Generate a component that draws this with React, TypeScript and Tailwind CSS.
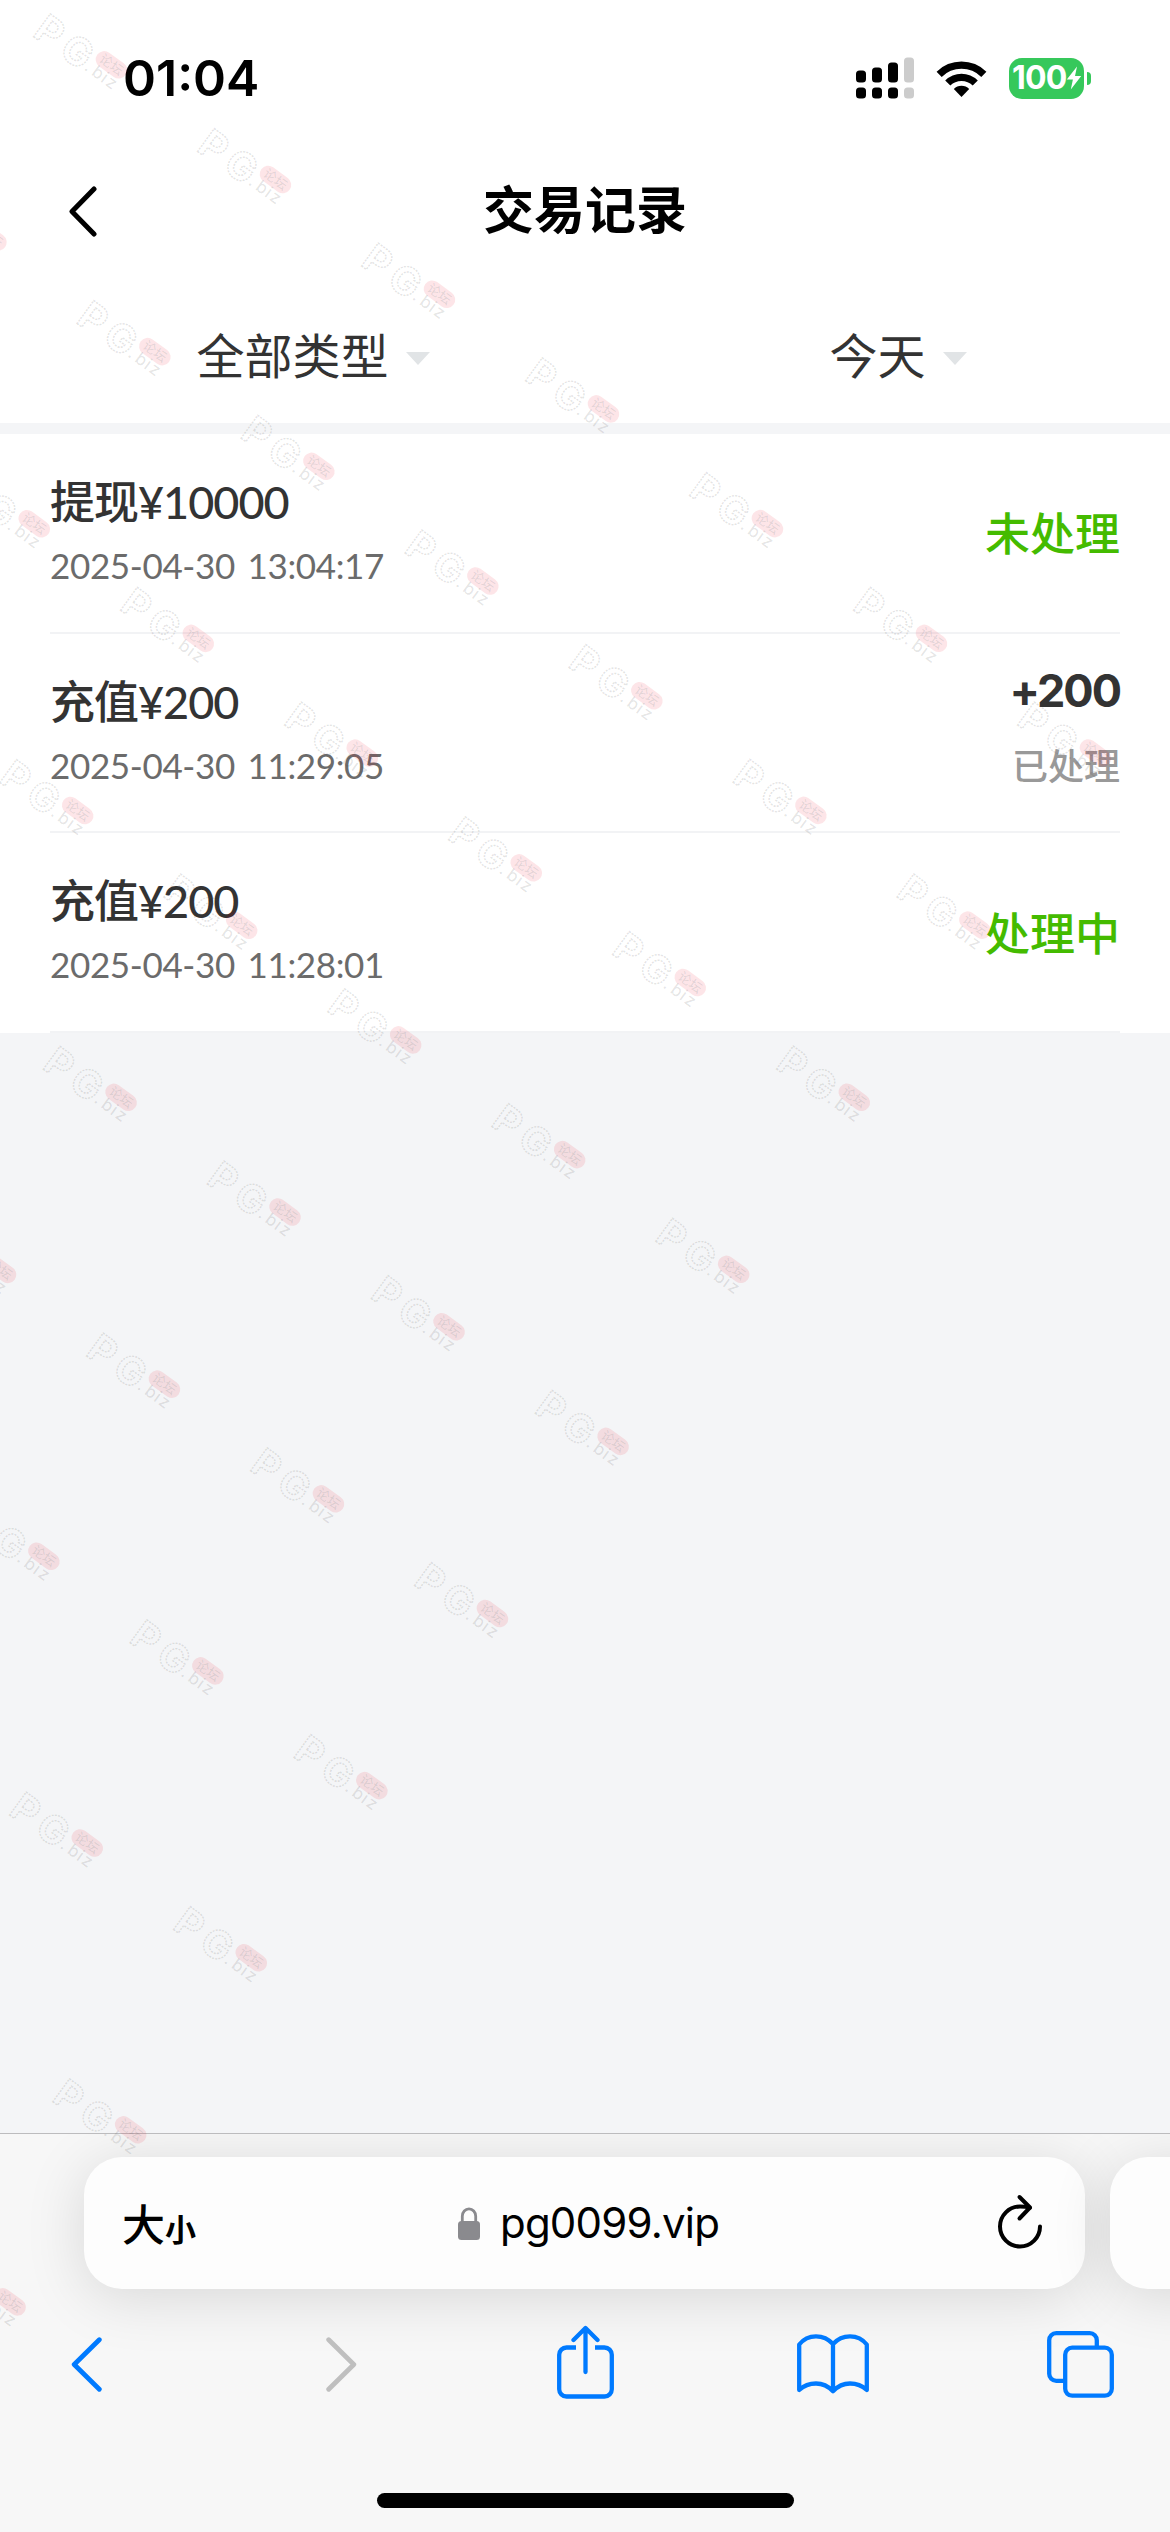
import type { ReactNode } from 'react';

type Transaction = {
  id: number;
  title: string;
  time: string;
  status: string;
  change?: string;
};

const transactions: Transaction[] = [
  { id: 1, title: '提现¥10000', time: '2025-04-30 13:04:17', status: '未处理' },
  { id: 2, title: '充值¥200', time: '2025-04-30 11:29:05', status: '已处理', change: '+200' },
  { id: 3, title: '充值¥200', time: '2025-04-30 11:28:01', status: '处理中' },
];

// Diagonal lattice: `row` steps down the page, `col` steps along the slanted line
const marks: { x: number; y: number }[] = [];
for (let row = 0; row <= 9; row++) {
  for (let col = -3; col <= 6 - row; col++) {
    const x = 33 + col * 164 + row * 43.4;
    const y = 14 + col * 114.7 + row * 286.8;
    if (x > -95 && y > -80) marks.push({ x, y });
  }
}

function Watermark() {
  return (
    <svg
      className="pointer-events-none absolute inset-0"
      width="1170"
      height="2532"
      viewBox="0 0 1170 2532"
      aria-hidden="true"
    >
      {marks.map((m, i) => (
        <g key={i} transform={`translate(${m.x} ${m.y + 21}) rotate(36)`}>
          <text
            x="-1 31"
            y="1"
            fontFamily="Inter, sans-serif"
            fontWeight="700"
            fontSize="39"
            fill="#000"
            fillOpacity="0.02"
            stroke="#555"
            strokeOpacity="0.17"
            strokeWidth="1.5"
            strokeDasharray="2 1.2"
          >
            PG
          </text>
          <g transform="translate(81 -22)">
            <rect x="-17.5" y="-8.5" width="35" height="17" rx="8.5" fill="#f00020" fillOpacity="0.1" />
            <text
              y="4.5"
              textAnchor="middle"
              fontFamily="'Noto Sans CJK SC', sans-serif"
              fontSize="13"
              fill="#3c6464"
              fillOpacity="0.15"
            >
              论坛
            </text>
          </g>
          <text
            x="61 69.5 81 87"
            y="-2"
            fontFamily="Inter, sans-serif"
            fontSize="17"
            fill="#444"
            fillOpacity="0.15"
          >
            .biz
          </text>
        </g>
      ))}
    </svg>
  );
}

function StatusBar() {
  return (
    <div className="flex h-[156px] items-center pl-[123px] pr-[79px]">
      <span className="font-[Inter] text-[50px] font-semibold leading-none text-black">01:04</span>
      <svg className="ml-auto" width="58" height="42" viewBox="0 0 58 42">
        <g fill="#000">
          <rect x="0" y="13.5" width="10" height="12" rx="3.5" />
          <rect x="16" y="10.5" width="10" height="15" rx="3.5" />
          <rect x="32" y="5.5" width="10" height="20" rx="3.5" />
          <rect x="0" y="30.5" width="10" height="11" rx="3.5" />
          <rect x="16" y="30.5" width="10" height="11" rx="3.5" />
          <rect x="32" y="30.5" width="10" height="11" rx="3.5" />
        </g>
        <g fill="#ccc">
          <rect x="48" y="0.5" width="10" height="25" rx="3.5" />
          <rect x="48" y="30.5" width="10" height="11" rx="3.5" />
        </g>
      </svg>
      <svg className="ml-[22px]" width="51" height="37" viewBox="0 0 51 37">
        <path d="M0.6 11.8a35 35 0 0 1 49.8 0l-5.1 5.2a27.7 27.7 0 0 0-39.6 0z" />
        <path d="M9.2 20.4a23 23 0 0 1 32.6 0l-5.1 5.2a15.8 15.8 0 0 0-22.4 0z" />
        <path d="M17.8 29a11 11 0 0 1 15.4 0l-7.7 7.9z" />
      </svg>
      <div className="ml-[22px] flex h-[41px] w-[75px] items-center rounded-[13px] bg-[#36c85b] pl-[3px]">
        <span className="font-[Inter] text-[32px] font-bold leading-none tracking-[-0.8px] text-white">100</span>
        <svg className="-ml-px shrink-0" width="16" height="24" viewBox="0 0 16 24">
          <path d="M11 0.5L0.8 13.4h6.1L4.8 23.5L15.2 10H9z" fill="#fff" />
        </svg>
      </div>
      <span className="ml-[3px] h-[13px] w-1 rounded-r-full bg-[#36c85b]" />
    </div>
  );
}

function Filter({ label }: { label: string }) {
  return (
    <button className="flex flex-1 items-center justify-center pl-[41px] text-[48px] leading-none text-[#333]">
      {label}
      <svg className="ml-[17px] mt-1" width="24" height="13" viewBox="0 0 24 13">
        <path d="M0 0h24L12 13z" fill="#e1e4e6" />
      </svg>
    </button>
  );
}

function TransactionRow({ item }: { item: Transaction }) {
  return (
    <li className="mx-[50px] flex items-stretch justify-between border-b-2 border-[#f2f3f5]">
      <div className="flex flex-col pt-[36px]">
        <span className="text-[45px] font-medium leading-[64px] tracking-[-1px] text-[#333]">{item.title}</span>
        <span className="-mt-px text-[35px] leading-[64px] tracking-[-0.35px] text-[#6b6b6b] [word-spacing:4px]">
          {item.time}
        </span>
      </div>
      {item.change ? (
        <div className="flex flex-col items-end pt-[25px]">
          <span className="font-[Inter] text-[45px] font-bold leading-[64px] tracking-[-2px] text-[#333]">
            {item.change}
          </span>
          <span className="mt-[11px] text-[36px] font-medium leading-[64px] text-[#999]">{item.status}</span>
        </div>
      ) : (
        <span className="self-center pt-[4px] text-[45px] font-medium leading-none text-[#44bb00]">
          {item.status}
        </span>
      )}
    </li>
  );
}

function ToolbarButton({ className, children }: { className: string; children: ReactNode }) {
  return <button className={className}>{children}</button>;
}

function BrowserBar() {
  return (
    <footer className="h-[399px] overflow-hidden border-t border-[#bcbcbe] bg-[#f7f7f7]">
      <div className="flex gap-[25px] pl-[84px] pt-[23px]">
        <div className="flex h-[132px] w-[1001px] shrink-0 items-center rounded-[38px] bg-[#fdfdfd] pl-[38px] pr-[43px] shadow-[0_8px_60px_rgba(0,0,0,0.13)]">
          <div className="flex w-[336px] items-baseline pt-[2px] leading-none text-black">
            <span className="text-[43px] font-medium">大</span>
            <span className="text-[31px] font-bold">小</span>
          </div>
          <svg width="22" height="33" viewBox="0 0 22 33">
            <rect x="0" y="14" width="22" height="19" rx="3.5" fill="#8a8a8e" />
            <path d="M4.3 15V9.2a6.7 7.4 0 0 1 13.4 0V15" fill="none" stroke="#8a8a8e" strokeWidth="2.8" />
          </svg>
          <span className="ml-[20px] font-[Inter] text-[42px] leading-none tracking-[-0.8px] text-black">
            pg0099.vip
          </span>
          <svg
            className="-mt-[5px] ml-auto"
            width="44"
            height="56"
            viewBox="0 0 44 56"
            fill="none"
            stroke="#000"
            strokeWidth="4"
          >
            <path d="M42 33.5A20 20 0 1 1 22 13.5c3.8 0 7 .4 10 1.3" strokeLinecap="round" />
            <path d="M21.5 4L32 14.5L21.5 25.5" strokeLinecap="round" strokeLinejoin="round" />
          </svg>
        </div>
        <div className="h-[132px] w-[200px] shrink-0 rounded-[38px] bg-[#fdfdfd] shadow-[0_8px_60px_rgba(0,0,0,0.13)]" />
      </div>

      <nav className="flex h-[150px] items-center pl-[71px]" aria-label="Browser">
        <ToolbarButton className="shrink-0">
          <svg width="31" height="55" viewBox="0 0 31 55" fill="none" stroke="#007aff" strokeWidth="4.8">
            <path d="M28.3 2.7L3.2 27.5l25.1 24.8" strokeLinecap="round" strokeLinejoin="round" />
          </svg>
        </ToolbarButton>
        <ToolbarButton className="ml-[224px] shrink-0">
          <svg width="31" height="55" viewBox="0 0 31 55" fill="none" stroke="#bfbfbf" strokeWidth="4.8">
            <path d="M2.7 2.7l25.1 24.8L2.7 52.3" strokeLinecap="round" strokeLinejoin="round" />
          </svg>
        </ToolbarButton>
        <ToolbarButton className="ml-[200px] shrink-0 pb-1">
          <svg width="57" height="74" viewBox="0 0 57 74" fill="none" stroke="#007aff" strokeWidth="4.3">
            <path d="M19 22.5H9.5a7.3 7.3 0 0 0-7.3 7.3v34.4a7.3 7.3 0 0 0 7.3 7.3h38a7.3 7.3 0 0 0 7.3-7.3V29.8a7.3 7.3 0 0 0-7.3-7.3H38" />
            <path d="M28.5 47V3.5M16.5 15l12-12 12 12" strokeLinecap="round" strokeLinejoin="round" />
          </svg>
        </ToolbarButton>
        <ToolbarButton className="ml-[183px] shrink-0">
          <svg width="72" height="60" viewBox="0 0 72 60" fill="none" stroke="#007aff" strokeWidth="4.3">
            <path
              d="M36 10C31.5 5 25.5 2.3 19 2.3S6.5 5 2.2 10.5V56C6.5 52 12.5 49.5 19 49.5S31.5 52.5 36 57.2C40.5 52.5 46.5 49.5 53 49.5S65.5 52 69.8 56V10.5C65.5 5 59.5 2.3 53 2.3S40.5 5 36 10zM36 10v47"
              strokeLinecap="round"
              strokeLinejoin="round"
            />
          </svg>
        </ToolbarButton>
        <ToolbarButton className="ml-[178px] shrink-0">
          <svg width="67" height="67" viewBox="0 0 67 67" fill="none" stroke="#007aff" strokeWidth="4.3">
            <rect x="18.2" y="16.7" width="46.6" height="48" rx="7" />
            <path d="M18 49.8H9.2a7 7 0 0 1-7-7V9.2a7 7 0 0 1 7-7h33.6a7 7 0 0 1 7 7v7.5" />
          </svg>
        </ToolbarButton>
      </nav>

      <div className="mx-auto mt-[54px] h-[15px] w-[417px] rounded-full bg-black" />
    </footer>
  );
}

export default function App() {
  return (
    <div className="relative flex h-[2532px] w-[1170px] flex-col overflow-hidden bg-[#f4f5f7] font-[Lato,'Noto_Sans_CJK_SC',sans-serif]">
      <header className="h-[423px] bg-white">
        <StatusBar />
        <div className="grid h-[110px] grid-cols-[1fr_auto_1fr] items-center">
          <button className="justify-self-start pl-[69px]" aria-label="Back">
            <svg width="28" height="51" viewBox="0 0 28 51" fill="none" stroke="#000" strokeWidth="5">
              <path d="M25 3L3 25.5L25 48" strokeLinecap="round" strokeLinejoin="round" />
            </svg>
          </button>
          <h1 className="pb-[3px] text-[51px] font-semibold leading-none text-black">交易记录</h1>
        </div>
        <div className="mt-[42px] flex h-[96px]">
          <Filter label="全部类型" />
          <Filter label="今天" />
        </div>
      </header>

      <main className="flex-1">
        <ul className="mt-[11px] grid h-[599px] grid-rows-3 bg-white">
          {transactions.map((item) => (
            <TransactionRow key={item.id} item={item} />
          ))}
        </ul>
      </main>

      <BrowserBar />
      <Watermark />
    </div>
  );
}
